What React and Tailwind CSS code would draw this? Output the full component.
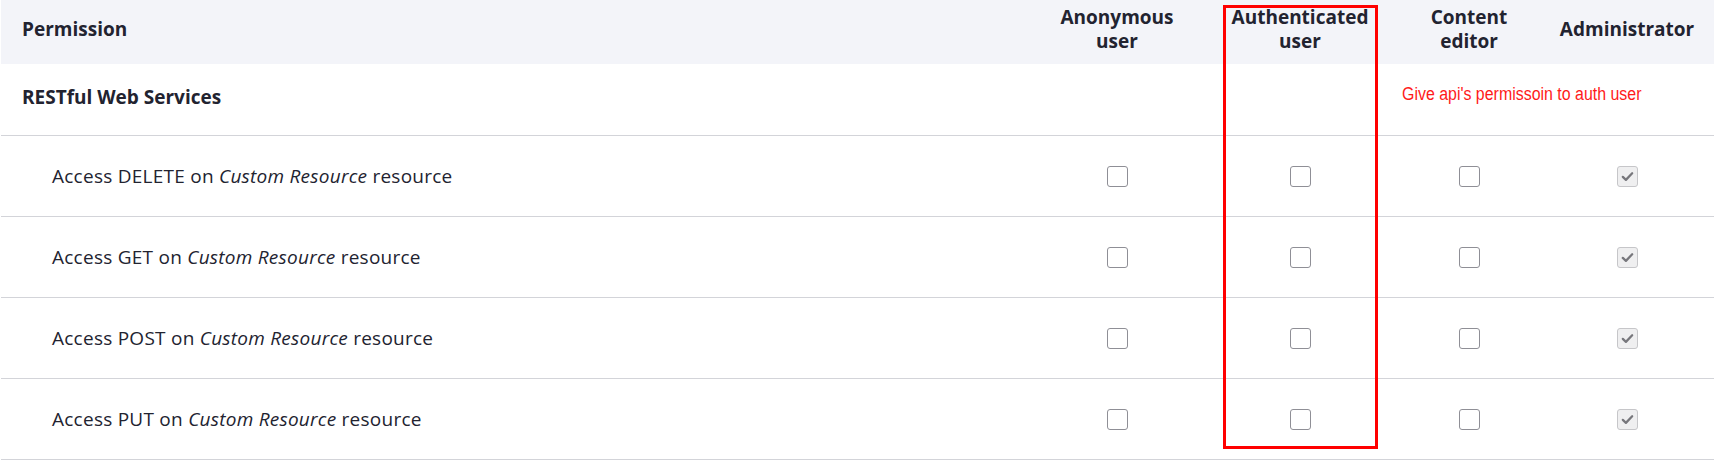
import React from "react";

const roles = ["anonymous", "authenticated", "editor", "admin"];

const permissions = [
  { method: "DELETE" },
  { method: "GET" },
  { method: "POST" },
  { method: "PUT" },
];

function Checkbox({ checked }) {
  if (checked) {
    return (
      <span className="flex h-[21px] w-[21px] items-center justify-center rounded-[3px] border border-[#c6c6c9] bg-[#efeff0]">
        <svg width="15" height="15" viewBox="0 0 16 16">
          <path d="M3 8.4 L6.3 11.6 L13 4.6" fill="none" stroke="#77777c" strokeWidth="2.4" strokeLinecap="round" strokeLinejoin="round" />
        </svg>
      </span>
    );
  }
  return <span className="block h-[21px] w-[21px] rounded-[3px] border border-[#8f8f96] bg-white" />;
}

export default function App() {
  const cols = "grid grid-cols-[1031px_170px_196px_142px_174px]";

  return (
    <div className="relative h-[462px] w-[1734px] overflow-hidden bg-white text-[#222330]" style={{ fontFamily: '"Open Sans", "Noto Sans", sans-serif' }}>
      <div className="ml-px w-[1713px]">
        {/* en-tête */}
        <div className={`${cols} h-[64px] bg-[#f3f4f9] text-[19px] font-bold leading-6`}>
          <div className="flex items-center pb-[7px] pl-[21px]">Permission</div>
          <div className="flex flex-col items-center justify-center pb-[7px] text-center">
            <span>Anonymous</span>
            <span>user</span>
          </div>
          <div className="flex flex-col items-center justify-center pb-[7px] text-center">
            <span>Authenticated</span>
            <span>user</span>
          </div>
          <div className="flex flex-col items-center justify-center pb-[7px] text-center">
            <span>Content</span>
            <span>editor</span>
          </div>
          <div className="flex items-center justify-center pb-[7px]">Administrator</div>
        </div>

        {/* module */}
        <div className="flex h-[72px] items-center border-b border-[#d3d4d9] pb-[4px] pl-[21px] text-[19px] font-bold">
          RESTful Web Services
        </div>

        {permissions.map((p) => (
          <div key={p.method} className={`${cols} h-[81px] border-b border-[#d3d4d9]`}>
            <div className="flex items-center pl-[51px] text-[19px] tracking-[0.25px]">
              <span>
                Access {p.method} on <em>Custom Resource</em> resource
              </span>
            </div>
            {roles.map((r) => (
              <div key={r} className="flex items-center justify-center">
                <Checkbox checked={r === "admin"} />
              </div>
            ))}
          </div>
        ))}
      </div>

      {/* annotation */}
      <div className="absolute left-[1223px] top-[5px] h-[444px] w-[155px] border-[3px] border-[#ff0000]" />
      <div
        className="absolute left-[1402px] top-[85px] origin-left scale-x-[0.885] whitespace-nowrap text-[18px] leading-[18px] text-[#ff1a1a]"
        style={{ fontFamily: '"Liberation Sans", Arial, sans-serif' }}
      >
        Give api's permissoin to auth user
      </div>
    </div>
  );
}
